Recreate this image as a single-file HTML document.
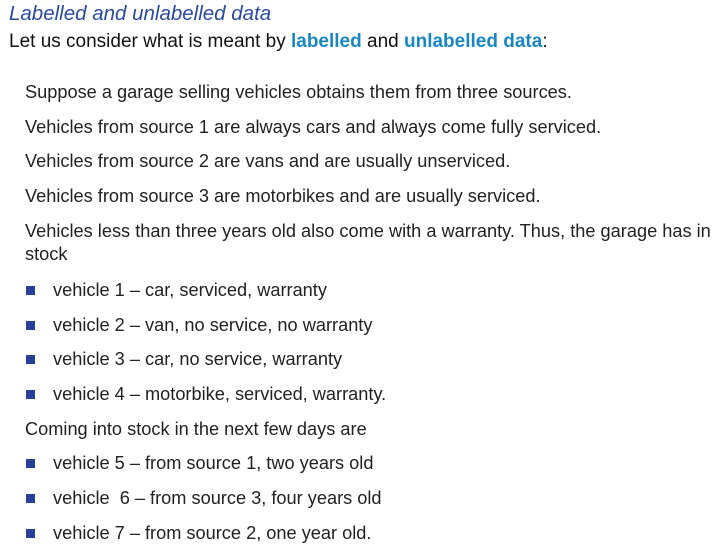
<!DOCTYPE html>
<html><head><style>
body{margin:0;width:724px;height:550px;background:#fff;overflow:hidden;font-family:"Liberation Sans",sans-serif;position:relative}
.l{position:absolute;white-space:nowrap;color:#222;font-size:18.2px;line-height:22px;left:25px}
.b{left:53px}
.sq{position:absolute;left:26px;width:9px;height:9px;background:#26409a}
.h{position:absolute;left:9px;top:2px;font-size:20.5px;font-style:italic;color:#2b4a9c;white-space:nowrap}
.i{position:absolute;left:9px;top:31px;font-size:19px;color:#111;white-space:nowrap}
.k{color:#1a86c0;font-weight:bold}
</style></head><body>
<div class="h">Labelled and unlabelled data</div>
<div class="i">Let us consider what is meant by <span class="k">labelled</span> and <span class="k">unlabelled data</span>:</div>
<div class="l" style="top:81px">Suppose a garage selling vehicles obtains them from three sources.</div>
<div class="l" style="top:116px">Vehicles from source 1 are always cars and always come fully serviced.</div>
<div class="l" style="top:150px">Vehicles from source 2 are vans and are usually unserviced.</div>
<div class="l" style="top:185px">Vehicles from source 3 are motorbikes and are usually serviced.</div>
<div class="l" style="top:220px">Vehicles less than three years old also come with a warranty. Thus, the garage has in</div>
<div class="l" style="top:243px">stock</div>
<div class="sq" style="top:286px"></div><div class="l b" style="top:279px">vehicle 1 – car, serviced, warranty</div>
<div class="sq" style="top:321px"></div><div class="l b" style="top:314px">vehicle 2 – van, no service, no warranty</div>
<div class="sq" style="top:355px"></div><div class="l b" style="top:348px">vehicle 3 – car, no service, warranty</div>
<div class="sq" style="top:390px"></div><div class="l b" style="top:383px">vehicle 4 – motorbike, serviced, warranty.</div>
<div class="l" style="top:418px">Coming into stock in the next few days are</div>
<div class="sq" style="top:459px"></div><div class="l b" style="top:452px">vehicle 5 – from source 1, two years old</div>
<div class="sq" style="top:494px"></div><div class="l b" style="top:487px">vehicle &nbsp;6 – from source 3, four years old</div>
<div class="sq" style="top:529px"></div><div class="l b" style="top:522px">vehicle 7 – from source 2, one year old.</div>
</body></html>
